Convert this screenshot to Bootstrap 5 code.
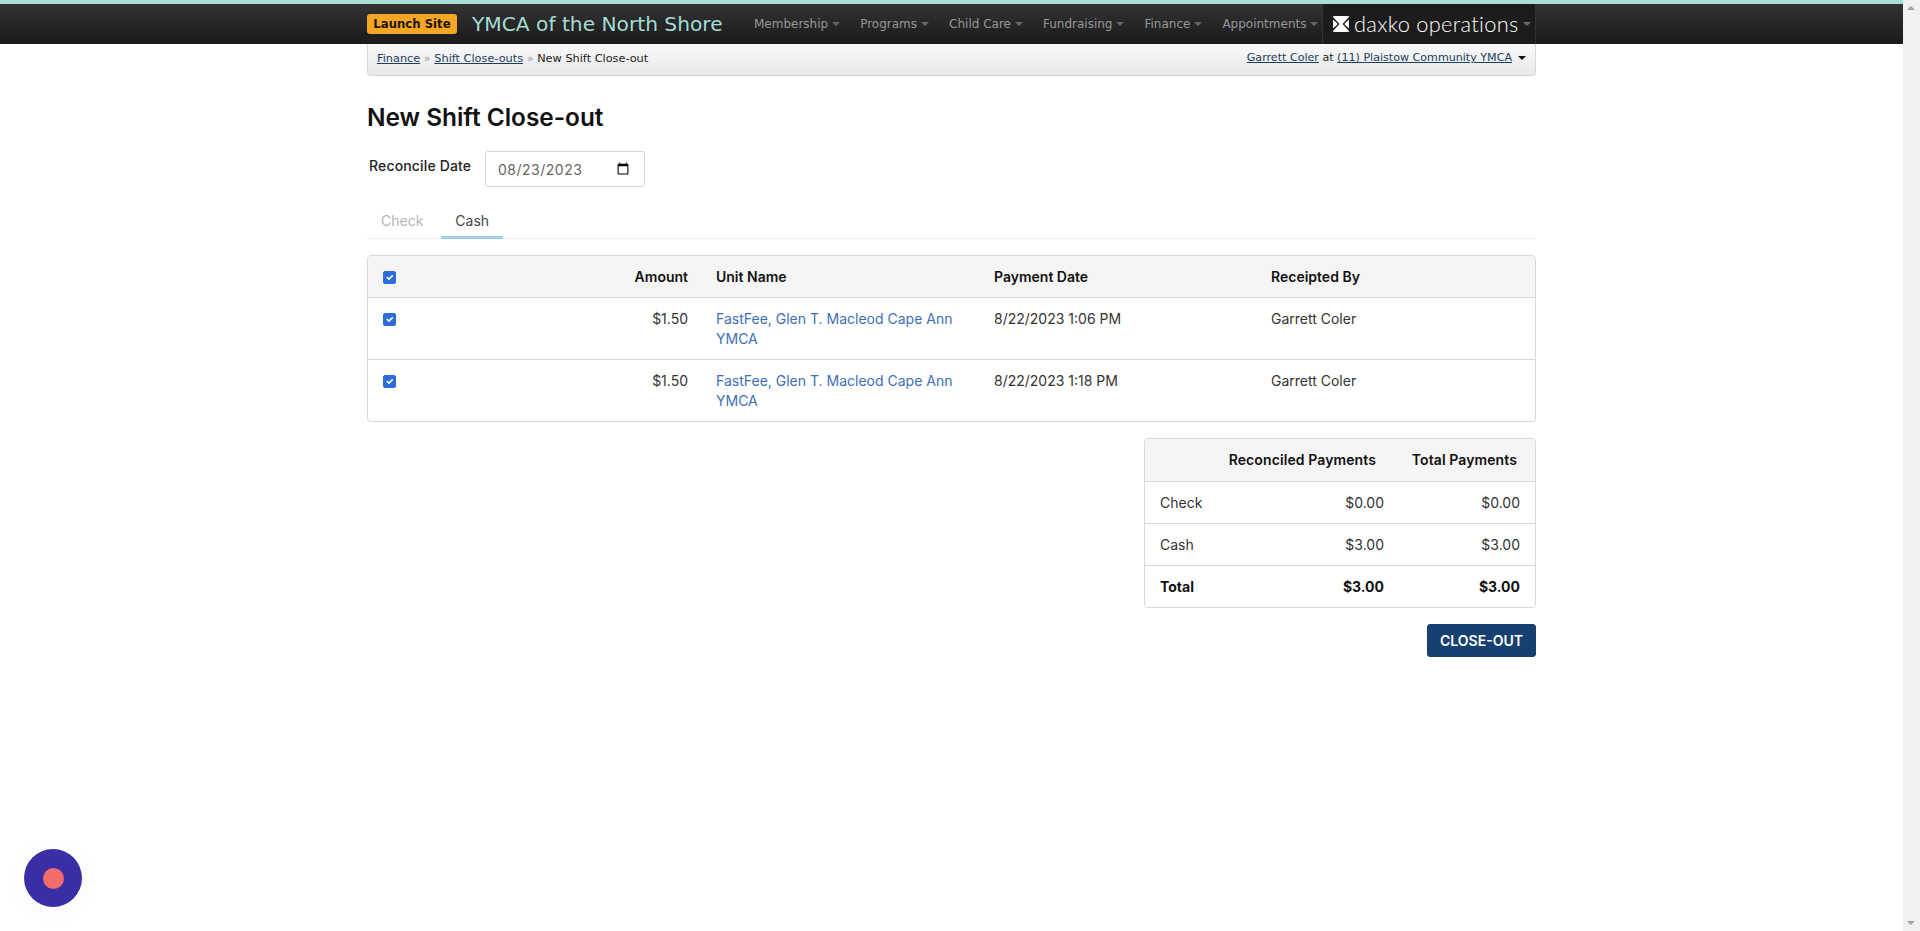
<!DOCTYPE html>
<html lang="en">

<head>
    <meta charset="UTF-8">
    <title>New Shift Close-out</title>
    <meta name="viewport" content="width=device-width, initial-scale=1">
    <link href="https://cdn.jsdelivr.net/npm/bootstrap@5.3.0/dist/css/bootstrap.min.css" rel="stylesheet">
    <style>
        html, body { height: 100%; }
        body { font-family: "Inter", "Liberation Sans", sans-serif; font-size: 14px; color: #333; padding-right: 17px; overflow: hidden; }
        .top-strip { height: 4px; background: #a9dfd9; }
        .top-bar { height: 40px; background: linear-gradient(#333333, #1a1a1a); font-family: "DejaVu Sans", sans-serif; }
        .page-wrap { width: 1169px; margin-left: 367px; }
        .launch-btn { background: #f5a623; color: #1c1400; font-size: 13px; font-weight: 700; padding: 2px 0; border-radius: 3px; line-height: 16px; width: 90px; height: 20px; white-space: nowrap; text-align: center; font-family: "DejaVu Sans Condensed", "DejaVu Sans", sans-serif; }
        .org-name { color: #a5dcd6; font-size: 20.2px; margin-left: 15px; width: 282px; white-space: nowrap; }
        .menu-item { color: #979797; font-size: 12px; text-decoration: none; white-space: nowrap; }
        .menu-item::after, .product-caret { content: ""; display: inline-block; margin-left: 4px; vertical-align: 2px; border-top: 4px solid #666; border-left: 4px solid transparent; border-right: 4px solid transparent; }
        .product-box { width: 214px; height: 40px; background: #1c1c1c; border-left: 1px solid #333; border-right: 1px solid #333; margin-left: auto; color: #fff; padding-left: 9px; }
        .product-name { font-family: "Lato", sans-serif; font-weight: 300; font-size: 21.8px; white-space: nowrap; letter-spacing: .3px; }
        .product-caret { margin-left: 0; }
        .crumb-bar { height: 32px; background: linear-gradient(#f9f9f9, #e8e8e8); border: 1px solid #d8d8d8; border-top: 0; border-radius: 0 0 4px 4px; font-family: "DejaVu Sans", sans-serif; font-size: 11.3px; color: #222; padding: 0 9px; }
        .crumb-bar a { color: #1b3f5e; }
        .crumb-sep { color: #999; }
        .crumb-user { padding-bottom: 2px; font-size: 11.1px; }
        .crumb-caret { display: inline-block; margin-left: 6px; vertical-align: 1px; border-top: 4px solid #111; border-left: 4px solid transparent; border-right: 4px solid transparent; }
        .page-title { font-size: 24.4px; font-weight: 600; color: #111; margin: 0; line-height: 30px; padding-top: 26px; }
        .date-row { margin-top: 19px; }
        .date-label { font-weight: 500; color: #222; margin-left: 2px; width: 116px; margin-bottom: 7px; letter-spacing: .15px; }
        .date-input { width: 160px; height: 36px; font-size: 14px; color: #666; padding: 0 12px; border-color: #d5d5d5; border-radius: 3px; font-family: inherit; letter-spacing: .5px; }
        .tab-row { margin-top: 20px; border-bottom: 1px solid #eee; height: 32px; }
        .tab-link { padding: 2px 14px 0; color: #b5b5b5; height: 32px; line-height: 24px; text-decoration: none; }
        .tab-link.is-active { color: #444; border-bottom: 3px solid #a3cdef; margin-left: 4px; }
        .data-box { border: 1px solid #d8d8d8; border-radius: 4px; overflow: hidden; }
        .data-box .table { margin: 0; font-size: 14px; --bs-table-border-color: #d8d8d8; color: #333; }
        .data-box th { background: #f5f5f5; font-weight: 600; color: #111; padding: 11px 14px 10px; line-height: 20px; vertical-align: middle; white-space: nowrap; }
        .data-box td { padding: 11px 14px 10px; line-height: 20px; }
        .data-box tr:last-child td { border-bottom: 0; }
        .data-box th:first-child, .data-box td:first-child { padding-left: 15px; }
        .data-box .form-check-input { width: 13px; height: 13px; margin: 0; border-radius: 2px; background-color: #2c6cdb; border-color: #2c6cdb; display: block; }
        .data-box td .form-check-input { margin-top: 3.5px; }
        .data-box a { color: #3d6fb5; text-decoration: none; }
        .sum-box { width: 392px; margin-top: 16px; }
        .sum-box .table { table-layout: fixed; }
        .sum-box th, .sum-box td { padding: 7px 15px; height: 42px; vertical-align: middle; }
        .sum-box td { padding-top: 8px; padding-bottom: 6px; }
        .sum-box th { letter-spacing: .1px; }
        .sum-box th:nth-child(1) { width: 70px; }
        .sum-box th:nth-child(2) { width: 184px; padding-left: 5px; padding-right: 23px; }
        .sum-box th:nth-child(3) { width: 136px; padding-left: 5px; padding-right: 18px; }
        .sum-box .total-row td { font-weight: 700; color: #111; }
        .close-btn { background: #16406f; border-color: #16406f; color: #fff; font-size: 14px; font-weight: 600; height: 33px; width: 109px; padding: 0; border-radius: 3px; margin-top: 16px; }
        .fake-scroll { position: fixed; top: 0; right: 0; bottom: 0; width: 17px; background: #f1f1f1; }
        .fake-scroll::before, .fake-scroll::after { content: ""; position: absolute; left: 4px; border-left: 4px solid transparent; border-right: 4px solid transparent; }
        .fake-scroll::before { top: 6px; border-bottom: 4px solid #a3a3a3; }
        .fake-scroll::after { bottom: 6px; border-top: 4px solid #a3a3a3; }
        .help-bubble { position: fixed; left: 24px; bottom: 24px; width: 58px; height: 58px; border-radius: 50%; background: #3a2ea6; box-shadow: 0 4px 24px rgba(0, 0, 0, .03); }
        .help-bubble span { width: 21px; height: 21px; border-radius: 50%; background: #f56b6b; }
    </style>
</head>

<body>
    <div class="top-strip"></div>
    <div class="top-bar">
        <div class="page-wrap d-flex align-items-center h-100">
            <div class="launch-btn">Launch Site</div>
            <div class="org-name">YMCA of the North Shore</div>
            <div class="d-flex align-items-center" style="gap: 20px">
                <a class="menu-item" href="#">Membership</a>
                <a class="menu-item" href="#">Programs</a>
                <a class="menu-item" href="#">Child Care</a>
                <a class="menu-item" href="#">Fundraising</a>
                <a class="menu-item" href="#">Finance</a>
                <a class="menu-item" href="#">Appointments</a>
            </div>
            <div class="product-box d-flex align-items-center gap-1">
                <svg width="18" height="18" viewBox="0 0 18 18"><path fill="#fff" d="M2 1h14a1 1 0 0 1 1 1L10.500 9 17 16a1 1 0 0 1-1 1H2a1 1 0 0 1-1-1l6.500-7L1 2a1 1 0 0 1 1-1z"/><path fill="#fff" d="M1 4.500 5.800 9 1 13.500zM17 4.500 12.200 9 17 13.500z"/></svg>
                <span class="product-name">daxko operations</span><span class="product-caret"></span>
            </div>
        </div>
    </div>

    <div class="page-wrap">
        <div class="crumb-bar d-flex align-items-center justify-content-between">
            <div><a href="#">Finance</a> <span class="crumb-sep">»</span> <a href="#">Shift Close-outs</a> <span class="crumb-sep">»</span> New Shift Close-out</div>
            <div class="crumb-user"><a href="#">Garrett Coler</a> at <a href="#">(11) Plaistow Community YMCA</a><span class="crumb-caret"></span></div>
        </div>

        <h1 class="page-title">New Shift Close-out</h1>

        <div class="date-row d-flex align-items-center">
            <label class="date-label" for="reconcileDate">Reconcile Date</label>
            <input id="reconcileDate" type="date" class="form-control date-input" value="2023-08-23">
        </div>

        <div class="tab-row d-flex">
            <a class="tab-link" href="#">Check</a>
            <a class="tab-link is-active" href="#">Cash</a>
        </div>

        <div class="data-box mt-3">
            <table class="table">
                <thead>
                    <tr>
                        <th style="width: 189px"><input class="form-check-input" type="checkbox" checked></th>
                        <th class="text-end" style="width: 145px">Amount</th>
                        <th style="width: 278px">Unit Name</th>
                        <th style="width: 277px">Payment Date</th>
                        <th>Receipted By</th>
                    </tr>
                </thead>
                <tbody id="paymentRows"></tbody>
            </table>
        </div>

        <div class="d-flex flex-column align-items-end">
            <div class="data-box sum-box">
                <table class="table">
                    <thead>
                        <tr>
                            <th></th>
                            <th class="text-end">Reconciled Payments</th>
                            <th class="text-end">Total Payments</th>
                        </tr>
                    </thead>
                    <tbody>
                        <tr><td>Check</td><td class="text-end">$0.00</td><td class="text-end">$0.00</td></tr>
                        <tr><td>Cash</td><td class="text-end">$3.00</td><td class="text-end">$3.00</td></tr>
                        <tr class="total-row"><td>Total</td><td class="text-end">$3.00</td><td class="text-end">$3.00</td></tr>
                    </tbody>
                </table>
            </div>
            <button class="btn close-btn" type="button">CLOSE-OUT</button>
        </div>
    </div>

    <div class="help-bubble d-flex align-items-center justify-content-center"><span></span></div>
    <div class="fake-scroll"></div>

    <script>
        const payments = [
            { amount: '$1.50', unit: 'FastFee, Glen T. Macleod Cape Ann YMCA', date: '8/22/2023 1:06 PM', by: 'Garrett Coler' },
            { amount: '$1.50', unit: 'FastFee, Glen T. Macleod Cape Ann YMCA', date: '8/22/2023 1:18 PM', by: 'Garrett Coler' }
        ];

        const rows = document.getElementById('paymentRows');
        payments.forEach(p => {
            rows.innerHTML += `
          <tr>
            <td><input class="form-check-input" type="checkbox" checked></td>
            <td class="text-end">${p.amount}</td>
            <td><a href="#">${p.unit}</a></td>
            <td>${p.date}</td>
            <td>${p.by}</td>
          </tr>
        `;
        });
    </script>
    <script src="https://cdn.jsdelivr.net/npm/bootstrap@5.3.0/dist/js/bootstrap.bundle.min.js"></script>
</body>

</html>
